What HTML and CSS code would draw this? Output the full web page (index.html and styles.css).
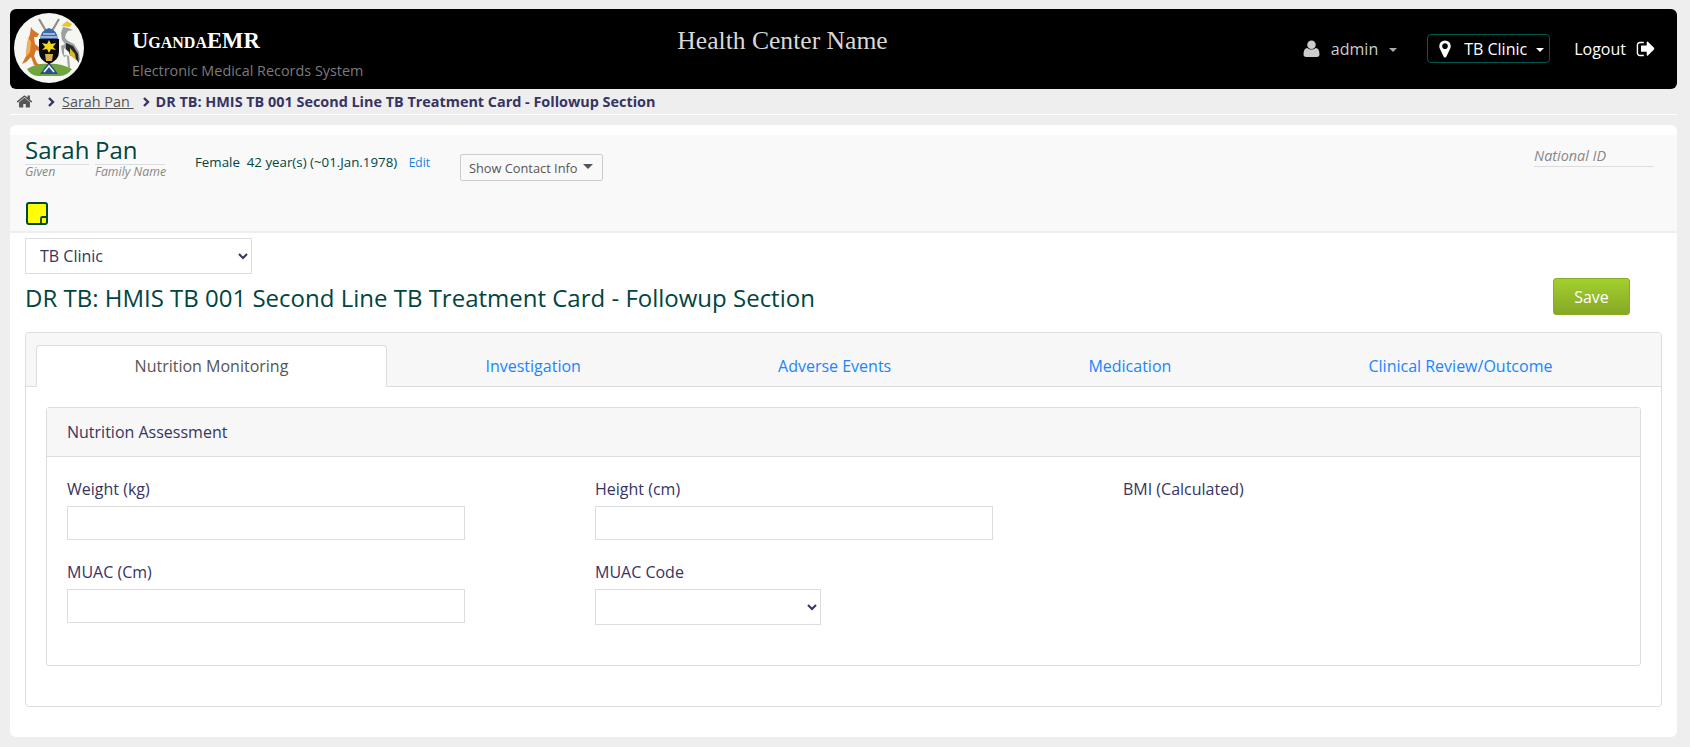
FILE: index.html
```html
<!DOCTYPE html>
<html lang="en">
<head>
<meta charset="utf-8">
<title>DR TB: HMIS TB 001 Second Line TB Treatment Card - Followup Section</title>
<link rel="stylesheet" href="styles.css">
</head>
<body>
<div class="page">
  <header class="topbar">
    <div class="crest">
      <svg viewBox="0 0 70 70" width="70" height="70">
        <circle cx="35" cy="35" r="35" fill="#f6f6f3"/>
        <path d="M13 56q10-6 21-5q12-1 24 5q-5 7-12 7H24q-7 0-11-7z" fill="#6fa53f"/>
        <path d="M26 61l9-12 9 12z" fill="#27508f"/>
        <path d="M30 59l5-6 5 6" fill="none" stroke="#fff" stroke-width="1.500"/>
        <path d="M17 14l2 3 6 4-2 3h-3l1 7 5 4 2 4-6-2-2 6 3 7 3 2h-6l-3-8-5 5-4 2 4-8 1-12 3-10z" fill="#d5752a"/>
        <path d="M14 24l3 5-1 10-4 5z" fill="#efb35c"/>
        <path d="M25 6l7 12M45 6l-7 12" stroke="#8f8f86" stroke-width="2.200"/>
        <path d="M26 26q1-9 9-11q8 2 9 11z" fill="#3a69ae"/>
        <path d="M29 21h12M27 24h16" stroke="#fff" stroke-width="1.200"/>
        <path d="M25 26h20v13q0 8-10 12q-10-4-10-12z" fill="#0a0a0a"/>
        <path d="M35 27l2 4 5-1-3 4 3 3-5-1-2 4-2-4-5 1 3-3-3-4 5 1z" fill="#f4d61f"/>
        <path d="M31 41h8l-1 7h-6z" fill="#d9b24d"/>
        <path d="M47 13l6-5 5 3-2 3z" fill="#e7c62f"/>
        <path d="M49 14l5 1 5 2-5 1-2 3-1 4 3 3 6 3 5 8 1 9-5-6-3 0-3 1 1 12h-2l-1-12-3 1-2-4-1-7 4-2-3-4-1-7z" fill="#9ba1a3"/>
        <path d="M52 30l7 3 5 8 1 9-4-5-5-3-4-6z" fill="#262626"/>
        <path d="M56 35l5 6 1 6-6-5z" fill="#d4b92e"/>
        <path d="M50 35l5 4 1 4-6-1z" fill="#f4f4ef"/>
      </svg>
    </div>
    <div class="brand">
      <div class="brand-name">UgandaEMR</div>
      <div class="brand-sub">Electronic Medical Records System</div>
    </div>
    <div class="facility">Health Center Name</div>
    <nav class="usernav">
      <span class="nav-user">
        <svg class="ico-user" viewBox="0 0 16 16" width="17" height="17"><circle cx="8" cy="4.500" r="4"/><path d="M0.500 13.500q0-5.500 3.500-6q1.800 1.500 4 1.500t4-1.500q3.500.5 3.500 6q0 2.500-2.500 2.500h-10q-2.500 0-2.500-2.500z"/></svg>
        <span>admin</span><i class="caret"></i>
      </span>
      <span class="nav-loc">
        <svg class="ico-pin" viewBox="0 0 1792 1792" width="20" height="20"><path d="M1152 640q0-106-75-181t-181-75-181 75-75 181 75 181 181 75 181-75 75-181zm256 0q0 109-33 179l-364 774q-16 33-47.500 52t-67.500 19-67.500-19-46.500-52L417 819q-33-70-33-179 0-212 150-362t362-150 362 150 150 362z"/></svg>
        <span>TB Clinic</span><i class="caret caret-light"></i>
      </span>
      <span class="nav-logout">
        <span>Logout</span>
        <svg class="ico-out" viewBox="0 0 1792 1792" width="20" height="20"><path d="M704 1440q0 4 1 20t.5 26.500-3 23.500-10 19.500-20.500 6.500H352q-119 0-203.500-84.500T64 1248V544q0-119 84.500-203.500T352 256h320q13 0 22.500 9.500T704 288q0 4 1 20t.5 26.500-3 23.500-10 19.500-20.500 6.500H352q-66 0-113 47t-47 113v704q0 66 47 113t113 47h312l11.500 1 11.500 3 8 5.500 7 9 2 13.500zm928-544q0 26-19 45l-544 544q-19 19-45 19t-45-19-19-45v-288H512q-26 0-45-19t-19-45V640q0-26 19-45t45-19h448V288q0-26 19-45t45-19 45 19l544 544q19 19 19 45z"/></svg>
      </span>
    </nav>
  </header>

  <div class="crumbs">
    <svg class="ico-home" viewBox="0 0 1792 1792" width="17" height="17"><path d="M1472 992v480q0 26-19 45t-45 19h-384v-384H768v384H384q-26 0-45-19t-19-45V992q0-1 .5-3t.5-3l575-474 575 474q1 2 1 6zm223-69-62 74q-8 9-21 11h-3q-13 0-21-7L896 424l-692 577q-12 8-24 7-13-2-21-11l-62-74q-8-10-7-23.500t11-21.500l719-599q32-26 76-26t76 26l244 204V288q0-14 9-23t23-9h192q14 0 23 9t9 23v408l219 182q10 8 11 21.500t-7 23.500z"/></svg>
    <svg class="chev chev-first" viewBox="0 0 8 10" width="8" height="10"><path d="M2 1l4 4-4 4"/></svg>
    <a class="crumb-link">Sarah Pan </a>
    <svg class="chev chev-second" viewBox="0 0 8 10" width="8" height="10"><path d="M2 1l4 4-4 4"/></svg>
    <strong class="crumb-current">DR TB: HMIS TB 001 Second Line TB Treatment Card - Followup Section</strong>
  </div>

  <main class="card">
    <section class="patient">
      <div class="patient-top">
        <div class="names">
          <div class="name-part name-given"><div class="name-val">Sarah</div><div class="name-cap">Given</div></div>
          <div class="name-part name-family"><div class="name-val">Pan</div><div class="name-cap">Family Name</div></div>
        </div>
        <div class="demo">Female&nbsp; 42 year(s) (~01.Jan.1978) <a class="edit">Edit</a></div>
        <button class="contact">Show Contact Info<i class="caret-dark"></i></button>
        <div class="natid">National ID</div>
      </div>
      <div class="note-wrap">
        <svg class="note" viewBox="0 0 22 23" width="22" height="23">
          <rect x="1" y="1" width="20" height="21" rx="2" fill="#ffff00" stroke="#00463f" stroke-width="2"/>
          <path d="M20 15h-3.500q-1.500 0-1.500 1.500V21" fill="none" stroke="#00463f" stroke-width="1.800"/>
        </svg>
      </div>
    </section>

    <section class="form-area">
      <select class="loc-select"><option>TB Clinic</option></select>
      <div class="title-row">
        <h1 class="form-title">DR TB: HMIS TB 001 Second Line TB Treatment Card - Followup Section</h1>
        <button class="save">Save</button>
      </div>

      <div class="tabs-panel">
        <ul class="tabs">
          <li class="tab tab-active">Nutrition Monitoring</li>
          <li class="tab">Investigation</li>
          <li class="tab">Adverse Events</li>
          <li class="tab">Medication</li>
          <li class="tab">Clinical Review/Outcome</li>
        </ul>
        <div class="tab-body">
          <div class="sub-card">
            <div class="sub-head">Nutrition Assessment</div>
            <div class="sub-body">
              <div class="field"><label>Weight (kg)</label><input class="txt" type="text"></div>
              <div class="field"><label>Height (cm)</label><input class="txt" type="text"></div>
              <div class="field"><label>BMI (Calculated)</label></div>
              <div class="field"><label>MUAC (Cm)</label><input class="txt" type="text"></div>
              <div class="field"><label>MUAC Code</label><select class="code-select"><option></option></select></div>
            </div>
          </div>
        </div>
      </div>
    </section>
  </main>
</div>
</body>
</html>
```

FILE: styles.css
```css
* { box-sizing: border-box; }
html, body { margin: 0; height: 100%; }
body { background: #eee; font-family: "Open Sans", sans-serif; color: #363463; font-size: 16px; overflow: hidden; }
.page { padding: 9px 13px 0 10px; }

.topbar { height: 80px; background: #000; border-radius: 6px; display: flex; position: relative; color: #fff; }
.crest { width: 122px; padding: 4px 0 0 4px; }
.crest svg { display: block; }
.brand { padding-top: 19px; }
.brand-name { font-family: "Liberation Serif", serif; font-weight: 700; font-size: 22.600px; line-height: 26px; font-variant: small-caps; color: #fff; }
.brand-sub { font-size: 14.400px; line-height: 20px; color: #7b7b7b; margin-top: 7px; }
.facility { position: absolute; left: 0; right: 122px; top: 17px; text-align: center; font-family: "Liberation Serif", serif; font-size: 25.600px; line-height: 30px; color: #d8d8d8; }
.usernav { margin-left: auto; display: flex; align-items: center; height: 55px; margin-top: 12px; font-size: 16px; }
.nav-user { display: flex; align-items: center; color: #ccc; }
.ico-user { fill: #ccc; margin-right: 11px; }
.caret { width: 0; height: 0; border-left: 4px solid transparent; border-right: 4px solid transparent; border-top: 4px solid #aaa; margin-left: 11px; margin-top: 3px; }
.caret-light { border-top-color: #fff; margin-left: 9px; }
.nav-loc { display: flex; align-items: center; height: 29px; width: 123px; margin-left: 30px; padding-left: 7px; border: 1px solid #00594f; border-radius: 4px; color: #fff; }
.ico-pin { fill: #fff; margin-right: 9px; }
.nav-logout { display: flex; align-items: center; margin-left: 24px; margin-right: 21px; color: #fff; }
.ico-out { fill: #fff; margin-left: 10px; }

.crumbs { height: 26px; display: flex; align-items: center; font-size: 14.400px; border-bottom: 1px solid #fff; padding: 0 0 1px 6px; color: #555; }
.ico-home { fill: #555; }
.chev { fill: none; stroke: #363463; stroke-width: 2.400; margin: 2px 7px 0 6px; }
.chev-first { margin-left: 14px; margin-right: 7px; }
.chev-second { margin-left: 8px; margin-right: 5px; }
.crumb-link { color: #555; text-decoration: underline; white-space: pre; }
.crumb-current { color: #363463; font-weight: 700; margin-left: 1px; }

.card { margin-top: 10px; height: 612px; background: #fff; border-radius: 6px; padding-top: 10px; }
.patient { height: 98px; background: #f9f9f9; border-bottom: 2px solid #eee; padding: 0 0 0 15px; }
.patient-top { display: flex; height: 60px; position: relative; color: #00463f; }
.names { display: flex; gap: 6px; }
.name-part { padding-top: 1px; }
.name-given { width: 64px; }
.name-family { width: 70px; }
.name-val { font-size: 24px; line-height: 27px; height: 29px; color: #00463f; border-bottom: 1px solid #ddd; white-space: nowrap; }
.name-cap { font-size: 12.300px; font-style: italic; color: #888; line-height: 13px; white-space: nowrap; }
.demo { font-size: 13.300px; margin-left: 30px; padding-top: 18px; line-height: 18px; white-space: pre; }
.edit { color: #1a7fe0; margin-left: 8px; font-size: 12px; }
.contact { height: 27px; margin: 19px 0 0 30px; padding: 0 9px 0 8px; background: #f9f9f9; border: 1px solid #ccc; border-radius: 2px; font: 12.800px "Open Sans", sans-serif; color: #555; display: flex; align-items: center; }
.caret-dark { width: 0; height: 0; border-left: 5.500px solid transparent; border-right: 5.500px solid transparent; border-top: 5px solid #555; margin-left: 6px; margin-top: -2px; }
.natid { position: absolute; left: 1509px; top: 12px; width: 120px; height: 20px; line-height: 18px; font-size: 14.400px; font-style: italic; color: #888; border-bottom: 1px solid #ddd; }
.note-wrap { padding: 7px 0 0 1px; }
.note { display: block; }

.form-area { padding: 5px 15px 0 15px; }
.loc-select { display: block; width: 227px; height: 36px; padding: 0 10px; font: 16px "Open Sans", sans-serif; color: #363463; background: #fff; border: 1px solid #ddd; border-radius: 0; }
.title-row { display: flex; justify-content: space-between; align-items: center; height: 47px; margin-top: 0; padding-right: 32px; margin-bottom: 11px; }
.form-title { margin: 0; font-size: 24px; font-weight: 400; color: #00463f; line-height: 30px; }
.save { width: 77px; height: 37px; margin-bottom: 2px; border: 1px solid #8aab26; border-radius: 3px; background: linear-gradient(#a2d02e, #86a827); color: #fff; font: 16px "Open Sans", sans-serif; }

.tabs-panel { border: 1px solid #ddd; border-radius: 4px; height: 375px; background: #fff; }
.tabs { display: flex; list-style: none; margin: 0; padding: 12px 10px 0; height: 54px; background: #f7f7f7; border-bottom: 1px solid #ddd; border-radius: 4px 4px 0 0; }
.tab { flex: 1 1 auto; text-align: center; height: 42px; line-height: 40px; color: #1a85ff; border: 1px solid transparent; white-space: nowrap; }
.tab-active { background: #fff; color: #555; border-color: #ddd; border-bottom-color: #fff; border-radius: 4px 4px 0 0; }
.tab-body { padding: 20px 20px 0; }
.sub-card { border: 1px solid #ddd; border-radius: 3px; height: 259px; }
.sub-head { height: 49px; background: #f7f7f7; border-bottom: 1px solid #ddd; padding: 0 20px; line-height: 48px; }
.sub-body { display: grid; grid-template-columns: repeat(3, 528px); padding: 20px 20px 0; }
.field { height: 83px; }
.field label { display: block; line-height: 24px; margin-bottom: 5px; }
.txt { display: block; width: 398px; height: 34px; border: 1px solid #ddd; background: #fff; }
.code-select { display: block; width: 226px; height: 36px; border: 1px solid #ddd; background: #fff; color: #363463; font: 16px "Open Sans", sans-serif; border-radius: 0; }
```
